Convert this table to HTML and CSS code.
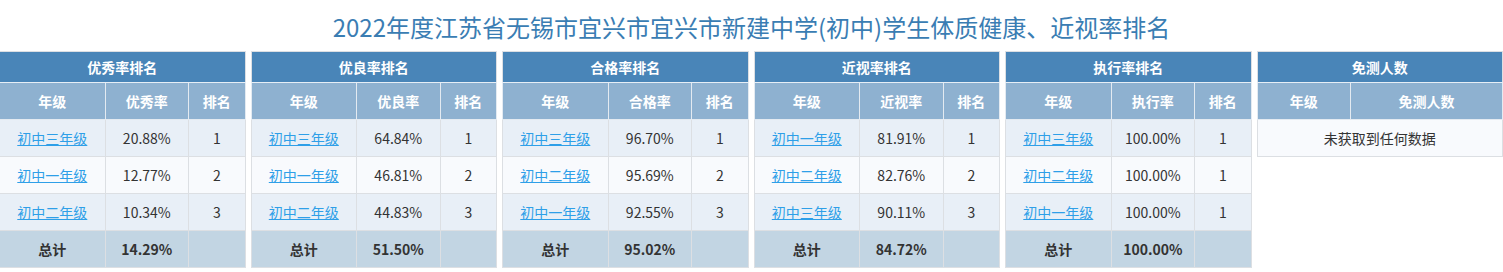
FILE: index.html
```html
<!DOCTYPE html>
<html lang="zh-CN">
<head>
<meta charset="utf-8">
<title>排名</title>
<link rel="stylesheet" href="styles.css">
</head>
<body>
<h1 class="title">2022年度江苏省无锡市宜兴市宜兴市新建中学(初中)学生体质健康、近视率排名</h1>
<div class="grid">
  <table class="rank">
    <colgroup><col class="c1"><col class="c2"><col class="c3"></colgroup>
    <thead>
      <tr class="h1"><th colspan="3">优秀率排名</th></tr>
      <tr class="h2"><th>年级</th><th>优秀率</th><th>排名</th></tr>
    </thead>
    <tbody>
      <tr class="odd"><td><a href="#">初中三年级</a></td><td>20.88%</td><td>1</td></tr>
      <tr class="even"><td><a href="#">初中一年级</a></td><td>12.77%</td><td>2</td></tr>
      <tr class="odd"><td><a href="#">初中二年级</a></td><td>10.34%</td><td>3</td></tr>
      <tr class="total"><td>总计</td><td>14.29%</td><td></td></tr>
    </tbody>
  </table>
  <table class="rank">
    <colgroup><col class="c1"><col class="c2"><col class="c3"></colgroup>
    <thead>
      <tr class="h1"><th colspan="3">优良率排名</th></tr>
      <tr class="h2"><th>年级</th><th>优良率</th><th>排名</th></tr>
    </thead>
    <tbody>
      <tr class="odd"><td><a href="#">初中三年级</a></td><td>64.84%</td><td>1</td></tr>
      <tr class="even"><td><a href="#">初中一年级</a></td><td>46.81%</td><td>2</td></tr>
      <tr class="odd"><td><a href="#">初中二年级</a></td><td>44.83%</td><td>3</td></tr>
      <tr class="total"><td>总计</td><td>51.50%</td><td></td></tr>
    </tbody>
  </table>
  <table class="rank">
    <colgroup><col class="c1"><col class="c2"><col class="c3"></colgroup>
    <thead>
      <tr class="h1"><th colspan="3">合格率排名</th></tr>
      <tr class="h2"><th>年级</th><th>合格率</th><th>排名</th></tr>
    </thead>
    <tbody>
      <tr class="odd"><td><a href="#">初中三年级</a></td><td>96.70%</td><td>1</td></tr>
      <tr class="even"><td><a href="#">初中二年级</a></td><td>95.69%</td><td>2</td></tr>
      <tr class="odd"><td><a href="#">初中一年级</a></td><td>92.55%</td><td>3</td></tr>
      <tr class="total"><td>总计</td><td>95.02%</td><td></td></tr>
    </tbody>
  </table>
  <table class="rank">
    <colgroup><col class="c1"><col class="c2"><col class="c3"></colgroup>
    <thead>
      <tr class="h1"><th colspan="3">近视率排名</th></tr>
      <tr class="h2"><th>年级</th><th>近视率</th><th>排名</th></tr>
    </thead>
    <tbody>
      <tr class="odd"><td><a href="#">初中一年级</a></td><td>81.91%</td><td>1</td></tr>
      <tr class="even"><td><a href="#">初中二年级</a></td><td>82.76%</td><td>2</td></tr>
      <tr class="odd"><td><a href="#">初中三年级</a></td><td>90.11%</td><td>3</td></tr>
      <tr class="total"><td>总计</td><td>84.72%</td><td></td></tr>
    </tbody>
  </table>
  <table class="rank">
    <colgroup><col class="c1"><col class="c2"><col class="c3"></colgroup>
    <thead>
      <tr class="h1"><th colspan="3">执行率排名</th></tr>
      <tr class="h2"><th>年级</th><th>执行率</th><th>排名</th></tr>
    </thead>
    <tbody>
      <tr class="odd"><td><a href="#">初中三年级</a></td><td>100.00%</td><td>1</td></tr>
      <tr class="even"><td><a href="#">初中二年级</a></td><td>100.00%</td><td>1</td></tr>
      <tr class="odd"><td><a href="#">初中一年级</a></td><td>100.00%</td><td>1</td></tr>
      <tr class="total"><td>总计</td><td>100.00%</td><td></td></tr>
    </tbody>
  </table>
  <table class="rank exempt">
    <colgroup><col class="e1"><col class="e2"></colgroup>
    <thead>
      <tr class="h1"><th colspan="2">免测人数</th></tr>
      <tr class="h2"><th>年级</th><th>免测人数</th></tr>
    </thead>
    <tbody>
      <tr class="even"><td colspan="2">未获取到任何数据</td></tr>
    </tbody>
  </table>
</div>
</body>
</html>
```
FILE: styles.css
```css
html, body {
  margin: 0;
  padding: 0;
  background: #ffffff;
}
body {
  font-family: "Microsoft YaHei", "Noto Sans CJK SC", "Noto Sans", sans-serif;
  color: #333333;
  overflow: hidden;
}
.title {
  margin: 10px 0 7px;
  font-size: 24px;
  line-height: 34px;
  font-weight: normal;
  color: #3a7db3;
  text-align: center;
}
.grid {
  display: grid;
  grid-template-columns: repeat(6, 1fr);
  column-gap: 5px;
  align-items: start;
  margin-left: -1px;
  width: 1504px;
}
.rank {
  width: 100%;
  border-collapse: collapse;
  table-layout: fixed;
  border: 1px solid #d9dcdf;
  font-size: 14px;
}
.c1 { width: 43%; }
.c2 { width: 34%; }
.c3 { width: 23%; }
.e1 { width: 38%; }
.e2 { width: 62%; }
.rank th,
.rank td {
  border: 1px solid #dcdfe3;
  text-align: center;
  padding: 0;
}
.h1 { height: 31px; }
.h1 th {
  background: #4985b8;
  color: #ffffff;
  font-weight: bold;
  border-bottom-color: #e6eef6;
}
.h2 { height: 37px; }
.h2 th {
  background: #8eb1d0;
  color: #ffffff;
  font-weight: bold;
  border-color: #e3eaf1;
  border-top-color: #e6eef6;
}
tbody tr { height: 37px; }
.odd td { background: #e8eff7; }
.even td { background: #f8fafd; }
.total td {
  background: #c2d5e3;
  font-weight: bold;
  color: #333333;
}
.rank a {
  color: #2e9fe8;
  text-decoration: underline;
}
```
